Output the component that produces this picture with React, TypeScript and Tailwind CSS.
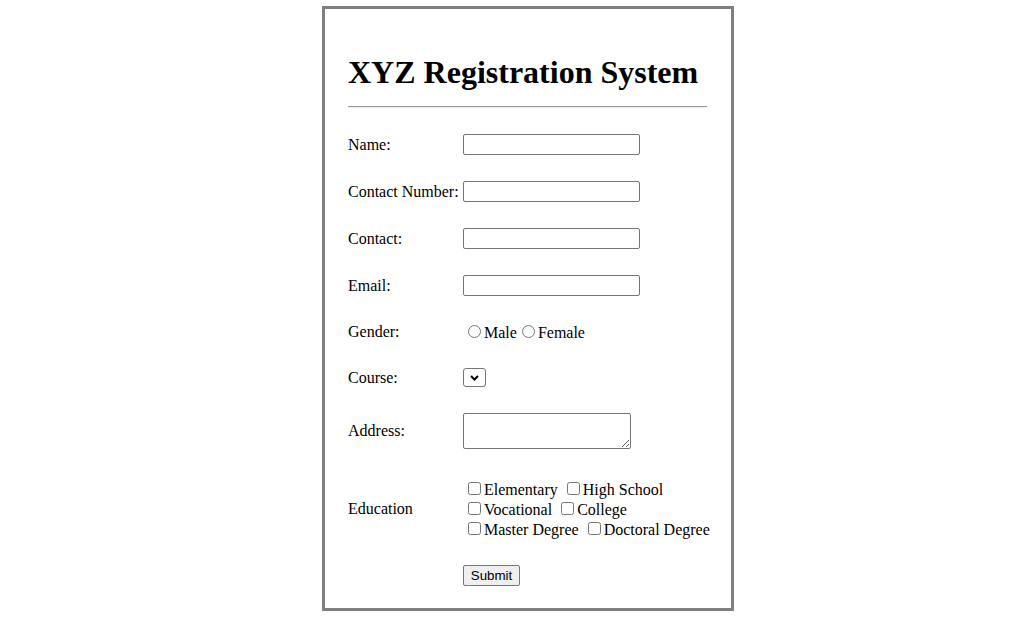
import React from "react";

const textInput =
  "block w-[177px] h-[21px] border border-[#767676] rounded-[2px] bg-white px-[2px] text-[13.33px] font-['Liberation_Sans',Arial,sans-serif]";

function Row({
  label,
  h,
  children,
}: {
  label: string;
  h: string;
  children: React.ReactNode;
}) {
  return (
    <div className={`flex items-center ${h}`}>
      <div className="w-[115px] shrink-0 whitespace-nowrap text-[16px]">{label}</div>
      <div className="flex-1">{children}</div>
    </div>
  );
}

const box = "m-[3px_3px_0_5px] w-[13px] h-[13px] align-baseline";

export default function App() {
  return (
    <div className="min-h-screen bg-white pt-[6px] font-['Liberation_Serif','Times_New_Roman',serif] leading-[normal] text-black">
      <div className="ml-[322px] w-[412px] h-[605px] border-[3px] border-[#808080] pl-[23px] pr-[24px] pt-[45px]">
        <h1 className="text-[32px] font-bold leading-[36px] whitespace-nowrap">XYZ Registration System</h1>
        <div className="mt-[16px] h-[2px] border-t border-t-[#9a9a9a] border-b border-b-[#eeeeee]" />
        <form className="mt-[13px] flex flex-col" onSubmit={(e) => e.preventDefault()}>
          <Row label="Name:" h="h-[47px]">
            <input type="text" className={textInput} />
          </Row>
          <Row label="Contact Number:" h="h-[47px]">
            <input type="text" className={textInput} />
          </Row>
          <Row label="Contact:" h="h-[47px]">
            <input type="text" className={textInput} />
          </Row>
          <Row label="Email:" h="h-[47px]">
            <input type="text" className={textInput} />
          </Row>
          <Row label="Gender:" h="h-[46px]">
            <div className="text-[16px] whitespace-nowrap">
              <input type="radio" name="gender" className={box} />Male<input type="radio" name="gender" className={box} />Female
            </div>
          </Row>
          <Row label="Course:" h="h-[45px]">
            <div className="flex h-[19px] w-[23px] items-center justify-center rounded-[3px] border border-[#767676] bg-white">
              <svg width="9" height="6" viewBox="0 0 9 6" fill="none">
                <path d="M1 1 L4.5 4.5 L8 1" stroke="#000" strokeWidth="2" />
              </svg>
            </div>
          </Row>
          <Row label="Address:" h="h-[62px]">
            <textarea className="block w-[168px] h-[36px] border border-[#767676] rounded-[2px] bg-white resize" />
          </Row>
          <Row label="Education" h="h-[94px]">
            <div className="text-[16px] whitespace-nowrap">
              <input type="checkbox" className={box} />Elementary{" "}
              <input type="checkbox" className={box} />High School
              <br />
              <input type="checkbox" className={box} />Vocational{" "}
              <input type="checkbox" className={box} />College
              <br />
              <input type="checkbox" className={box} />Master Degree{" "}
              <input type="checkbox" className={box} />Doctoral Degree
            </div>
          </Row>
          <Row label="" h="h-[39px]">
            <button
              type="submit"
              className="block w-[57px] h-[21px] border border-[#767676] rounded-[2px] bg-[#efefef] text-[13.33px] font-['Liberation_Sans',Arial,sans-serif] text-black"
            >
              Submit
            </button>
          </Row>
        </form>
      </div>
    </div>
  );
}
